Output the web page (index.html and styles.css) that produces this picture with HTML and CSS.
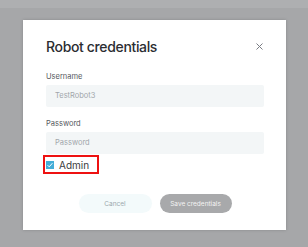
FILE: index.html
```html
<!DOCTYPE html>
<html>
<head>
<meta charset="utf-8">
<link rel="stylesheet" href="styles.css">
</head>
<body>
<div class="topbar"></div>
<div class="dialog">
  <div class="header">
    <h1 class="title">Robot credentials</h1>
    <svg class="close" width="7" height="7" viewBox="0 0 7 7"><path d="M0.5 0.5L6.5 6.5M6.5 0.5L0.5 6.5" stroke="#7a7d84" stroke-width="1"/></svg>
  </div>
  <label class="label first">Username</label>
  <div class="input">TestRobot3</div>
  <label class="label">Password</label>
  <div class="input">Password</div>
  <div class="check-row">
    <span class="checkbox"><svg width="8" height="8" viewBox="0 0 8 8"><path d="M1.6 4.2L3.2 5.8L6.4 2.2" stroke="#fff" stroke-width="1" fill="none"/></svg></span>
    <span class="check-label">Admin</span>
  </div>
  <div class="actions">
    <button class="btn cancel">Cancel</button>
    <button class="btn save">Save credentials</button>
  </div>
</div>
</body>
</html>
```
FILE: styles.css
```css
html, body {
  margin: 0;
  padding: 0;
}
body {
  width: 308px;
  height: 247px;
  background: #a6a7a9;
  font-family: Inter, "Noto Sans", sans-serif;
  overflow: hidden;
}
.topbar {
  height: 8px;
  background: #aeafb1;
}
.dialog {
  margin: 12px 0 0 23px;
  width: 263px;
  height: 210px;
  box-sizing: border-box;
  background: #fff;
  padding: 18px 22px 0 23px;
  display: flex;
  flex-direction: column;
  box-shadow: 0 0 3px rgba(0,0,0,0.18);
}
.header {
  display: flex;
  align-items: center;
  justify-content: space-between;
  height: 17px;
}
.title {
  margin: 0;
  font-size: 14px;
  line-height: 17px;
  font-weight: 500;
  letter-spacing: -0.35px;
  color: #2b2d31;
}
.close {
  margin-right: 1px;
}
.label {
  display: block;
  font-size: 7.5px;
  line-height: 9px;
  color: #55585e;
  margin-top: 12px;
  margin-bottom: 4px;
}
.label.first {
  margin-top: 17px;
}
.input {
  height: 22px;
  background: #f3f6f7;
  border-radius: 2px;
  box-sizing: border-box;
  padding-left: 9px;
  font-size: 7.5px;
  line-height: 22px;
  color: #a2a6ab;
}
.check-row {
  align-self: flex-start;
  margin-left: -3px;
  margin-top: 1px;
  display: flex;
  align-items: center;
  gap: 5px;
  border: 2px solid #ee1111;
  height: 19px;
  box-sizing: border-box;
  padding: 0 8px 0 1px;
}
.checkbox {
  width: 8px;
  height: 8px;
  background: #45aed8;
  display: flex;
}
.check-label {
  font-size: 10px;
  color: #3a3c40;
  line-height: 12px;
}
.actions {
  margin-top: 20px;
  display: flex;
  justify-content: center;
  gap: 8px;
}
.btn {
  height: 19px;
  width: 73px;
  border: none;
  border-radius: 10px;
  font-family: Inter, "Noto Sans", sans-serif;
  font-size: 6.5px;
  padding: 0;
}
.cancel {
  background: #f3fafb;
  color: #9aa7ad;
}
.save {
  width: 72px;
  background: #a8a9ab;
  color: #f4f4f4;
}
```
